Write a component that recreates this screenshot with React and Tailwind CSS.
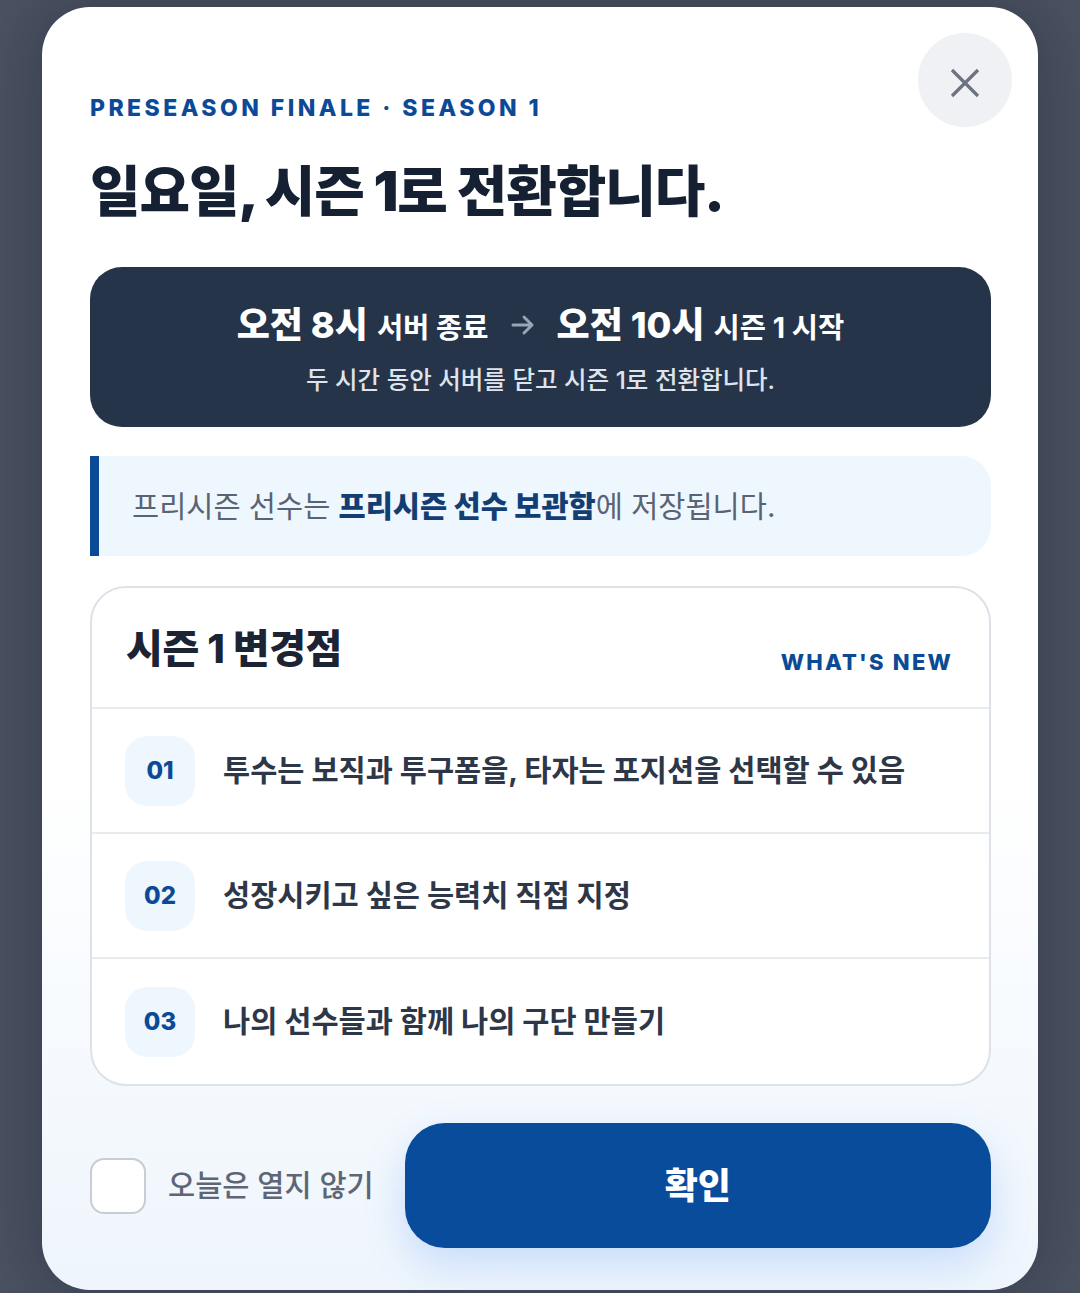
import React, { useState } from "react";

const font = { fontFamily: 'Inter, "Noto Sans CJK KR", sans-serif' };

const changes = [
  { no: "01", text: "투수는 보직과 투구폼을, 타자는 포지션을 선택할 수 있음" },
  { no: "02", text: "성장시키고 싶은 능력치 직접 지정" },
  { no: "03", text: "나의 선수들과 함께 나의 구단 만들기" },
];

const CloseIcon = () => (
  <svg width="30" height="30" viewBox="0 0 30 30" fill="none" className="translate-y-[3px]">
    <path d="M2 2L28 28M28 2L2 28" stroke="#6b7280" strokeWidth="3.2" strokeLinecap="butt" />
  </svg>
);

const ArrowIcon = () => (
  <svg width="24" height="22" viewBox="0 0 24 22" fill="none">
    <path d="M2 11H21M13 3L21 11L13 19" stroke="#9aa5b8" strokeWidth="3" strokeLinecap="round" strokeLinejoin="round" />
  </svg>
);

const ChangeRow = ({ no, text, last }) => (
  <div className={`flex items-center h-[125px] pl-[33px] gap-[28px] ${last ? "" : "border-b-2 border-[#e8ebef]"}`}>
    <div className="w-[70px] h-[70px] rounded-[22px] bg-[#eef6fe] flex items-center justify-center text-[24px] font-extrabold text-[#0b4a96]">
      {no}
    </div>
    <span className="text-[29.5px] font-bold text-[#2d3748]">{text}</span>
  </div>
);

export default function App() {
  const [checked, setChecked] = useState(false);

  return (
    <div className="min-h-[1293px] bg-[#4a5160] pt-[7px] pl-[42px] overflow-hidden" style={font}>
      <div className="relative w-[996px] h-[1283px] rounded-[48px] bg-gradient-to-b from-white from-60% to-[#eef5fc] shadow-[0_0_60px_rgba(15,23,42,0.35)] pl-[48px] pr-[47px] pt-[86px]">
        <button className="absolute top-[26px] right-[26px] w-[94px] h-[94px] rounded-full bg-[#f0f1f4] flex items-center justify-center">
          <CloseIcon />
        </button>

        <div className="text-[23px] leading-[30px] font-extrabold tracking-[0.15em] text-[#0b4a96]">
          PRESEASON FINALE · SEASON 1
        </div>
        <h1 className="mt-[35px] text-[55px] leading-[66px] font-black tracking-[-0.02em] text-[#162033]">
          일요일, 시즌 1로 전환합니다.
        </h1>

        <div className="mt-[43px] h-[160px] rounded-[32px] bg-[#263449] flex flex-col items-center justify-center gap-[12px]">
          <div className="flex items-center gap-[22px] text-white translate-y-[2px]">
            <span className="flex items-baseline gap-[9px]">
              <span className="text-[36px] font-extrabold">오전 8시</span>
              <span className="text-[28.5px] font-bold">서버 종료</span>
            </span>
            <ArrowIcon />
            <span className="flex items-baseline gap-[9px]">
              <span className="text-[36px] font-extrabold">오전 10시</span>
              <span className="text-[28.5px] font-bold">시즌 1 시작</span>
            </span>
          </div>
          <div className="text-[24.5px] font-medium text-[#dfe4ec]">
            두 시간 동안 서버를 닫고 시즌 1로 전환합니다.
          </div>
        </div>

        <div className="mt-[29px] h-[100px] border-l-[9px] border-[#0b4a96] rounded-r-[30px] bg-[#eef6fe] flex items-center pl-[33px]">
          <p className="text-[29.5px] text-[#5a6373]">
            프리시즌 선수는 <span className="font-extrabold text-[#123e74]">프리시즌 선수 보관함</span>에 저장됩니다.
          </p>
        </div>

        <div className="mt-[30px] rounded-[36px] border-2 border-[#dde2e8] bg-white overflow-hidden">
          <div className="h-[121px] flex items-end justify-between pl-[34px] pr-[36px] pb-[30px] border-b-2 border-[#e8ebef]">
            <h2 className="text-[40px] leading-[48px] font-extrabold tracking-[-0.01em] text-[#1c2434] mb-[4px]">
              시즌 1 변경점
            </h2>
            <span className="text-[22px] leading-[30px] font-extrabold tracking-[0.1em] text-[#0b4a96]">
              WHAT'S NEW
            </span>
          </div>
          {changes.map((c, i) => (
            <ChangeRow key={c.no} no={c.no} text={c.text} last={i === changes.length - 1} />
          ))}
        </div>

        <div className="mt-[37px] flex items-center">
          <label className="flex items-center gap-[22px] cursor-pointer">
            <input type="checkbox" className="hidden" checked={checked} onChange={() => setChecked(!checked)} />
            <span className="w-[56px] h-[56px] rounded-[14px] border-2 border-[#c8ccd3] bg-white" />
            <span className="text-[29.5px] font-medium text-[#5e6676]">오늘은 열지 않기</span>
          </label>
          <button className="ml-[31px] flex-1 h-[125px] rounded-[40px] bg-[#0a4c9c] text-white text-[36px] font-extrabold shadow-[0_16px_40px_rgba(59,130,246,0.22)]">
            확인
          </button>
        </div>
      </div>
    </div>
  );
}
